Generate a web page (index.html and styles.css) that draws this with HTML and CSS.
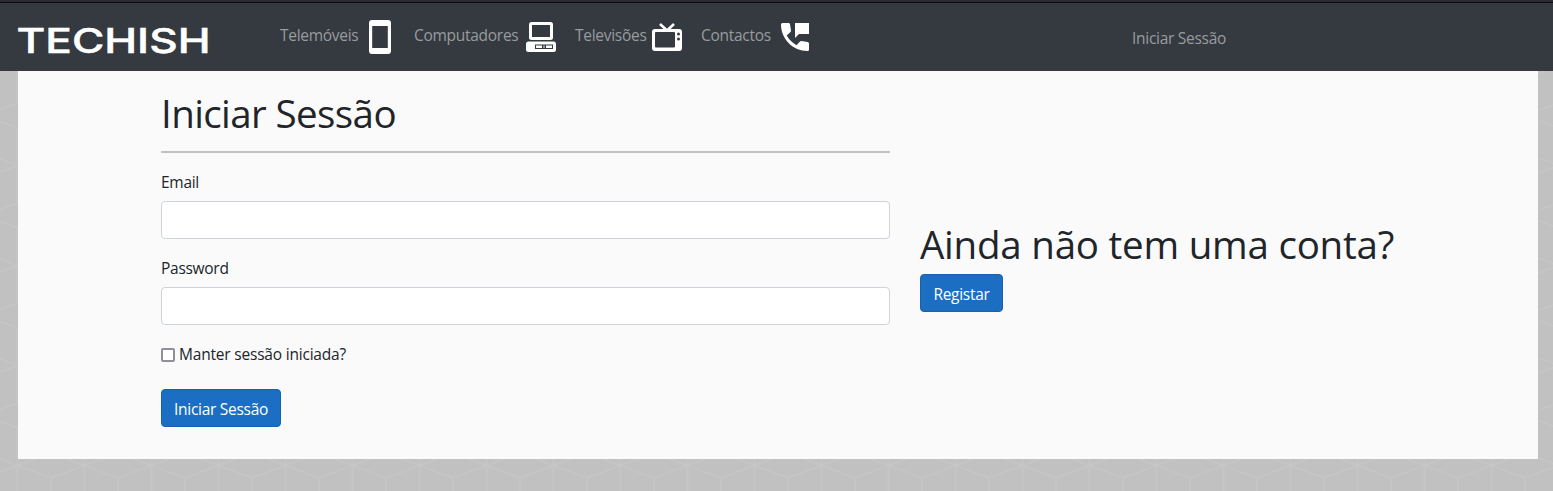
FILE: index.html
```
<!DOCTYPE html>
<html lang="pt">
<head>
<meta charset="utf-8">
<title>Techish - Iniciar Sessão</title>
<link rel="stylesheet" href="styles.css">
</head>
<body>
<svg class="backdrop" aria-hidden="true">
  <defs>
    <pattern id="cubes" x="17.5" y="65.5" width="67" height="100" patternUnits="userSpaceOnUse">
      <path d="M0 0L33.5 12.5L67 0M0 100L33.5 87.5L67 100M33.5 12.5V87.5M0 0V37.5L67 62.5V100M67 0V37.5L0 62.5V100" fill="none" stroke="#c9c9c9" stroke-width="1"/>
    </pattern>
  </defs>
  <rect width="100%" height="100%" fill="url(#cubes)"/>
</svg>
<header class="navbar">
  <a class="brand"><svg width="200" height="44" viewBox="0 0 200 44"><text class="brand-text" x="-1.500" y="34" textLength="194" lengthAdjust="spacingAndGlyphs">TECHISH</text></svg></a>
  <nav class="menu">
    <a class="item item-phone"><span>Telemóveis</span>
      <svg width="22" height="34" viewBox="0 0 22 34"><path fill="#fff" fill-rule="evenodd" d="M3 0H19Q22 0 22 3V31Q22 34 19 34H3Q0 34 0 31V3Q0 0 3 0ZM3.200 6V28H18.800V6Z"/></svg></a>
    <a class="item item-pc"><span>Computadores</span>
      <svg width="30" height="30" viewBox="0 0 30 30"><path fill="#fff" fill-rule="evenodd" d="M5.500 0H24.500Q27 0 27 2.500V15.500Q27 18 24.500 18H5.500Q3 18 3 15.500V2.500Q3 0 5.500 0ZM6 3V15H24V3ZM2.500 19.500H27.500Q30 19.500 30 22V27.500Q30 30 27.500 30H2.500Q0 30 0 27.500V22Q0 19.500 2.500 19.500ZM9 22.500V27H27V22.500ZM10 23.500H16V26H10ZM20 23.500H26V26H20ZM17.500 23.500H18.500V26H17.500Z"/></svg></a>
    <a class="item item-tv"><span>Televisões</span>
      <svg width="30" height="28" viewBox="0 0 30 28"><path fill="none" stroke="#fff" stroke-width="2.600" d="M8 1L15 7.500L22 1"/><path fill="#fff" fill-rule="evenodd" d="M3 6H27Q30 6 30 9V25Q30 28 27 28H3Q0 28 0 25V9Q0 6 3 6ZM4 9Q3 9 3 10V23.500Q3 24.500 4 24.500H22Q23 24.500 23 23.500V10Q23 9 22 9Z"/><circle cx="26.500" cy="11" r="1.500" fill="#343a40"/><circle cx="26.500" cy="16" r="1.500" fill="#343a40"/></svg></a>
    <a class="item item-contact"><span>Contactos</span>
      <svg width="28" height="28" viewBox="0 0 28 28"><path fill="#fff" d="M1.500 0H7.500Q8.700 0 9 1.200L10 7.600Q10.100 8.400 9.500 9L5.700 12.600Q9.500 19 15.500 22.200L19 18.500Q19.600 17.900 20.500 18L26.600 19Q28 19.300 28 20.500V26.500Q28 28 26.500 28C12 28 0 16 0 1.500Q0 0 1.500 0ZM14 0H28V11H18L14 15Z"/></svg></a>
  </nav>
  <a class="login"><span>Iniciar Sessão</span></a>
</header>
<main class="panel">
  <form class="form">
    <h1 class="title title-login">Iniciar Sessão</h1>
    <hr class="rule">
    <label class="label" for="email">Email</label>
    <input class="field" id="email" type="email">
    <label class="label" for="password">Password</label>
    <input class="field" id="password" type="password">
    <label class="check"><input class="box" type="checkbox"><span>Manter sessão iniciada?</span></label>
    <button class="button button-login" type="button">Iniciar Sessão</button>
  </form>
  <section class="signup">
    <h2 class="title title-signup">Ainda não tem uma conta?</h2>
    <button class="button button-signup" type="button">Registar</button>
  </section>
</main>
</body>
</html>
```
FILE: styles.css
```
* { box-sizing: border-box; }
body {
  margin: 0;
  min-height: 491px;
  overflow: hidden;
  background: #c1c1c1;
  color: #212529;
  font: 15.5px/24px "Open Sans", "Noto Sans", sans-serif;
  letter-spacing: -0.28px;
}
.backdrop { position: absolute; inset: 0; width: 100%; height: 491px; z-index: -1; }
.navbar {
  display: flex;
  height: 71px;
  padding-left: 18px;
  background: #343a40;
  border-top: 2px solid #2b2a33;
  box-shadow: inset 0 1px #0c0c0d;
  color: #999c9f;
}
.brand { width: 262px; padding-top: 17px; }
.brand svg { display: block; overflow: visible; }
.brand-text { font: 500 34.5px Inter, sans-serif; fill: #fff; stroke: #fff; stroke-width: 0.5px; letter-spacing: 0; }
.menu { display: flex; width: 852px; padding-top: 18px; }
.item { display: flex; align-items: flex-start; white-space: nowrap; }
.item span { padding-top: 3px; }
.item svg { display: block; flex: none; }
.item-phone { width: 134px; }
.item-phone span { width: 89px; }
.item-pc { width: 161px; }
.item-pc span { width: 112px; }
.item-pc svg { margin-top: 2px; }
.item-tv { width: 126px; }
.item-tv span { width: 77px; }
.item-tv svg { margin-top: 3px; }
.item-contact span { width: 80px; }
.item-contact svg { margin-top: 3px; }
.login { padding-top: 24px; }
.panel {
  display: grid;
  grid-template-columns: 729px 1fr;
  column-gap: 30px;
  width: 1520px;
  height: 388px;
  margin-left: 18px;
  padding: 18px 0 0 143px;
  background: #fafafa;
}
.form { display: flex; flex-direction: column; align-items: flex-start; }
.title { margin: 0; font-weight: 400; font-size: 38.5px; line-height: 48px; white-space: nowrap; }
.title-login { letter-spacing: -0.6px; }
.title-signup { letter-spacing: -0.22px; }
.rule { width: 100%; height: 2px; margin: 14px 0 17px; border: 0; background: #c1c1c1; }
.label { height: 24px; margin-bottom: 7px; }
.field {
  width: 100%;
  height: 38px;
  margin: 0 0 17px;
  border: 1px solid #ced4da;
  border-radius: 4px;
  background: #fff;
}
.check { display: flex; align-items: center; gap: 4px; height: 26px; margin-bottom: 21px; }
.check span { padding-bottom: 2px; letter-spacing: -0.2px; }
.box { appearance: none; width: 14px; height: 14px; margin: 0; border: 2px solid #8f8f9d; border-radius: 2px; background: #fff; }
.button {
  height: 38px;
  padding: 1px 0 0;
  border: 1px solid #1861ac;
  border-radius: 4px;
  background: #1b6ec2;
  color: #fff;
  font: inherit;
  letter-spacing: inherit;
}
.button-login { width: 120px; }
.button-signup { width: 83px; margin-top: 6px; }
.signup { padding-top: 131px; }
```
